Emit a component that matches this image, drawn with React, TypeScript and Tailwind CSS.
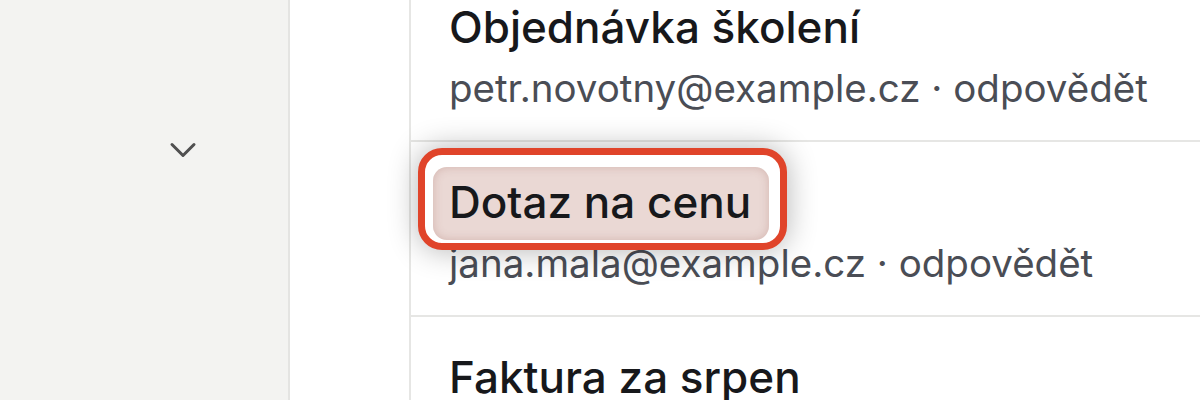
import { ChevronDown } from "lucide-react";

type Mail = { subject: string; from: string; marked?: boolean };

const mails: Mail[] = [
  { subject: "Objednávka školení", from: "petr.novotny@example.cz" },
  { subject: "Dotaz na cenu", from: "jana.mala@example.cz", marked: true },
  { subject: "Faktura za srpen", from: "uctarna@example.cz" },
];

const MailRow = ({ mail, first }: { mail: Mail; first?: boolean }) => {
  return (
    <div
      className={
        first
          ? "mt-[-33px] border-b-2 border-[#e6e6e4] pl-[38px] pt-[33px] pb-[28px]"
          : "border-b-2 border-[#e6e6e4] pl-[38px] pt-[33px] pb-[28px]"
      }
    >
      <h3 className="text-[44px] leading-[54px] font-medium text-[#17181b]">
        {mail.marked ? (
          <span className="relative inline-block">
            {/* highlight annotation */}
            <span className="absolute -left-[31px] -right-[36px] -top-[27px] -bottom-[21px] rounded-[24px] border-[7px] border-[#e0442a] bg-white shadow-[0_0_30px_rgba(0,0,0,0.3)]" />
            <span className="absolute -left-[16px] -right-[18px] -top-[8px] -bottom-[11px] rounded-[14px] bg-[#ead8d4] shadow-[inset_0_0_10px_rgba(160,100,90,0.3)]" />
            <span className="relative">{mail.subject}</span>
          </span>
        ) : (
          mail.subject
        )}
      </h3>
      <p className="mt-[10px] text-[38.5px] leading-[48px] text-[#4a4d55]">
        {mail.from} · odpovědět
      </p>
    </div>
  );
};

export default function App() {
  return (
    <div className="flex h-[400px] w-[1200px] overflow-hidden bg-white font-['Inter',sans-serif]">
      {/* folders */}
      <div className="w-[290px] shrink-0 border-r-2 border-[#e4e4e2] bg-[#f3f3f1] pt-[128px] pl-[161px]">
        <ChevronDown size={44} strokeWidth={1.65} className="text-[#505050]" />
      </div>
      <div className="w-[121px] shrink-0 border-r-2 border-[#e6e6e4] bg-white" />
      {/* list */}
      <div className="flex-1">
        {mails.map((m, i) => (
          <MailRow key={m.subject} mail={m} first={i === 0} />
        ))}
      </div>
    </div>
  );
}
